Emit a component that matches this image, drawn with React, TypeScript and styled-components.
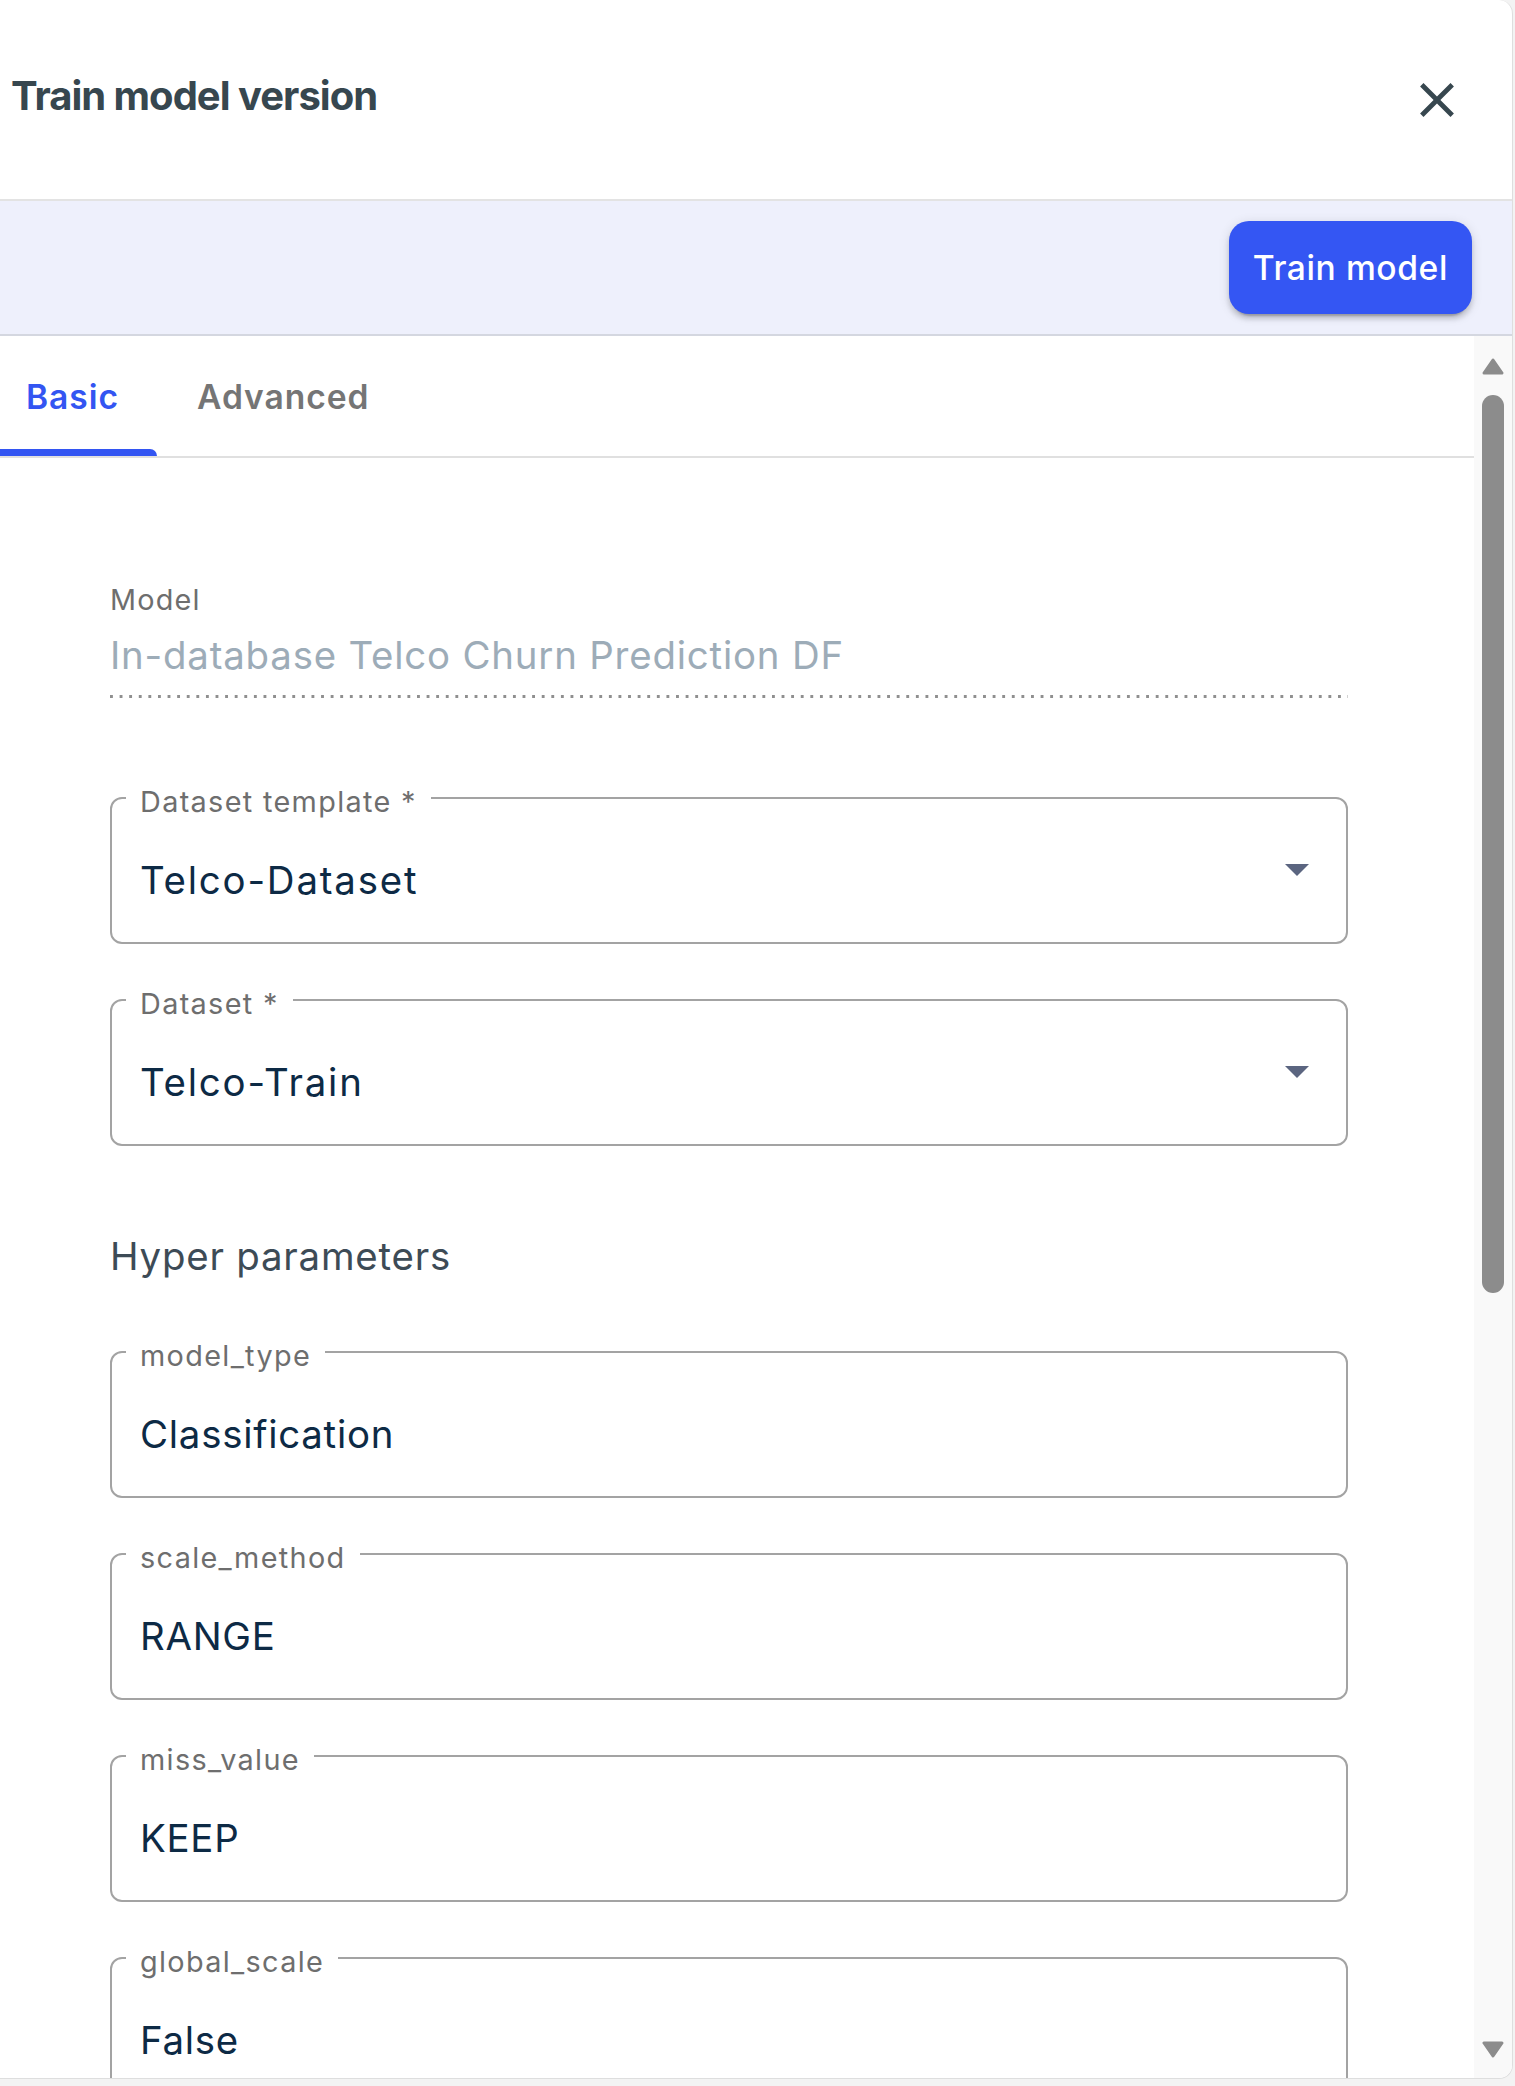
import React from 'react';
import styled, { createGlobalStyle } from 'styled-components';

const GlobalStyle = createGlobalStyle`
  html, body { margin: 0; padding: 0; background: #f3f3f3; }
  body { font-family: Inter, "Noto Sans", sans-serif; -webkit-font-smoothing: antialiased; }
  * { box-sizing: border-box; }
`;

const Panel = styled.div`
  width: 1513px;
  height: 2079px;
  background: #ffffff;
  border-right: 1px solid #dedede;
  border-bottom: 1px solid #dedede;
  border-radius: 0 14px 14px 0;
  display: flex;
  flex-direction: column;
  overflow: hidden;
`;

const Header = styled.header`
  height: 201px;
  flex: none;
  border-bottom: 2px solid #e3e3e3;
  display: flex;
  align-items: center;
  justify-content: space-between;
  padding: 0 46px 0 11px;
`;

const Title = styled.h1`
  margin: 0 0 7px 0;
  font-size: 40px;
  line-height: 48px;
  font-weight: 700;
  color: #37474f;
  letter-spacing: -1px;
`;

const CloseButton = styled.button`
  border: 0;
  background: transparent;
  padding: 0;
  width: 58px;
  height: 58px;
  display: flex;
  align-items: center;
  justify-content: center;
  color: #37474f;
  cursor: pointer;
`;

const Toolbar = styled.div`
  height: 135px;
  flex: none;
  background: #eef0fc;
  border-bottom: 2px solid #d4d7e0;
  display: flex;
  align-items: center;
  justify-content: flex-end;
  padding-right: 40px;
`;

const PrimaryButton = styled.button`
  height: 93px;
  padding: 0 24px;
  border: 0;
  border-radius: 20px;
  background: #3456f3;
  color: #ffffff;
  font-family: Inter, "Noto Sans", sans-serif;
  font-size: 33.6px;
  font-weight: 500;
  letter-spacing: 0.6px;
  box-shadow: 0 7px 2px -5px rgba(0, 0, 0, 0.2), 0 5px 5px 0 rgba(0, 0, 0, 0.14),
    0 2px 12px 0 rgba(0, 0, 0, 0.12);
  cursor: pointer;
`;

const Body = styled.div`
  flex: 1;
  min-height: 0;
  display: flex;
`;

const Main = styled.div`
  flex: 1;
  min-width: 0;
  overflow: hidden;
  display: flex;
  flex-direction: column;
`;

const Tabs = styled.div`
  height: 122px;
  flex: none;
  border-bottom: 2px solid #e0e0e0;
  display: flex;
`;

const Tab = styled.div<{ $width?: number; $pad: number }>`
  display: flex;
  flex-direction: column;
  padding-top: 7px;
  width: ${(p) => (p.$width ? `${p.$width}px` : 'auto')};
  padding-left: ${(p) => p.$pad}px;
`;

const TabLabel = styled.span<{ $active?: boolean }>`
  flex: 1;
  display: flex;
  align-items: center;
  font-size: 33.6px;
  font-weight: 600;
  letter-spacing: 0.96px;
  color: ${(p) => (p.$active ? '#3355f2' : '#757575')};
`;

const Indicator = styled.div<{ $active?: boolean }>`
  height: 7px;
  margin-left: ${(p) => (p.$active ? '-26px' : '0')};
  background: ${(p) => (p.$active ? '#3355f2' : 'transparent')};
  border-radius: 0 7px 0 0;
`;

const Form = styled.div`
  padding: 125px 0 0 110px;
  width: 1348px;
  display: flex;
  flex-direction: column;
`;

const StaticLabel = styled.div`
  font-size: 28.8px;
  line-height: 34px;
  letter-spacing: 1.2px;
  color: #6e6e6e;
`;

const StaticValue = styled.div`
  font-size: 38.4px;
  line-height: 55px;
  letter-spacing: 0.8px;
  color: #9dacb8;
  padding: 11px 0 14.5px;
  background-image: linear-gradient(to right, #8f8f8f 3px, transparent 3px);
  background-size: 9.6px 2.5px;
  background-repeat: repeat-x;
  background-position: left bottom;
`;

const Field = styled.fieldset<{ $gap: number }>`
  margin: ${(p) => p.$gap}px 0 0 0;
  padding: 0 37px 0 28px;
  border: 2px solid #a3a3a3;
  border-radius: 12px;
  min-width: 0;
`;

const Legend = styled.legend`
  margin-left: -14px;
  padding: 8px 14px 0;
  font-size: 28.8px;
  line-height: 34px;
  letter-spacing: 1.35px;
  color: #6e6e6e;
`;

const FieldRow = styled.div`
  height: 123px;
  display: flex;
  align-items: flex-start;
`;

const FieldValue = styled.div<{ $wide?: boolean }>`
  flex: 1;
  padding-top: 34px;
  font-size: 38.4px;
  line-height: 55px;
  letter-spacing: ${(p) => (p.$wide ? '1.8px' : '0.75px')};
  color: #0d2a45;
`;

const DropArrow = styled.svg`
  margin-top: 45px;
  flex: none;
`;

const SectionTitle = styled.h2`
  margin: 83px 0 0 0;
  font-size: 38.4px;
  line-height: 55px;
  font-weight: 400;
  letter-spacing: 0.8px;
  color: #3d4b56;
`;

const ScrollTrack = styled.div`
  width: 38px;
  flex: none;
  background: #f9f9f9;
  display: flex;
  flex-direction: column;
  align-items: center;
  padding: 22px 0 20px;
`;

const Thumb = styled.div`
  width: 22px;
  height: 898px;
  margin-top: 20px;
  border-radius: 11px;
  background: #8c8c8c;
`;

const Spacer = styled.div`
  flex: 1;
`;

type FieldDef = { label: string; value: string; select?: boolean; gap: number };

const topFields: FieldDef[] = [
  { label: 'Dataset template *', value: 'Telco-Dataset', select: true, gap: 79.5 },
  { label: 'Dataset *', value: 'Telco-Train', select: true, gap: 35 },
];

const hyperFields: FieldDef[] = [
  { label: 'model_type', value: 'Classification', gap: 47 },
  { label: 'scale_method', value: 'RANGE', gap: 35 },
  { label: 'miss_value', value: 'KEEP', gap: 35 },
  { label: 'global_scale', value: 'False', gap: 35 },
];

function OutlinedField({ label, value, select, gap }: FieldDef) {
  return (
    <Field $gap={gap}>
      <Legend>{label}</Legend>
      <FieldRow>
        <FieldValue $wide={select}>{value}</FieldValue>
        {select && (
          <DropArrow width="24" height="12" viewBox="0 0 24 12">
            <polygon points="0,0 24,0 12,12" fill="#5b6580" />
          </DropArrow>
        )}
      </FieldRow>
    </Field>
  );
}

export default function App() {
  return (
    <>
      <GlobalStyle />
      <Panel>
        <Header>
          <Title>Train model version</Title>
          <CloseButton aria-label="close">
            <svg width="58" height="58" viewBox="0 0 24 24">
              <path
                fill="currentColor"
                d="M19 6.41 17.59 5 12 10.59 6.41 5 5 6.41 10.59 12 5 17.59 6.41 19 12 13.41 17.59 19 19 17.59 13.41 12z"
              />
            </svg>
          </CloseButton>
        </Header>
        <Toolbar>
          <PrimaryButton>Train model</PrimaryButton>
        </Toolbar>
        <Body>
          <Main>
            <Tabs>
              <Tab $width={157} $pad={26}>
                <TabLabel $active>Basic</TabLabel>
                <Indicator $active />
              </Tab>
              <Tab $pad={40}>
                <TabLabel>Advanced</TabLabel>
                <Indicator />
              </Tab>
            </Tabs>
            <Form>
              <StaticLabel>Model</StaticLabel>
              <StaticValue>In-database Telco Churn Prediction DF</StaticValue>
              {topFields.map((f) => (
                <OutlinedField key={f.label} {...f} />
              ))}
              <SectionTitle>Hyper parameters</SectionTitle>
              {hyperFields.map((f) => (
                <OutlinedField key={f.label} {...f} />
              ))}
            </Form>
          </Main>
          <ScrollTrack>
            <svg width="22" height="17" viewBox="0 0 22 17">
              <polygon points="11,2 20,15 2,15" fill="#8c8c8c" stroke="#8c8c8c" strokeWidth="3" strokeLinejoin="round" />
            </svg>
            <Thumb />
            <Spacer />
            <svg width="22" height="17" viewBox="0 0 22 17">
              <polygon points="2,2 20,2 11,15" fill="#8c8c8c" stroke="#8c8c8c" strokeWidth="3" strokeLinejoin="round" />
            </svg>
          </ScrollTrack>
        </Body>
      </Panel>
    </>
  );
}
